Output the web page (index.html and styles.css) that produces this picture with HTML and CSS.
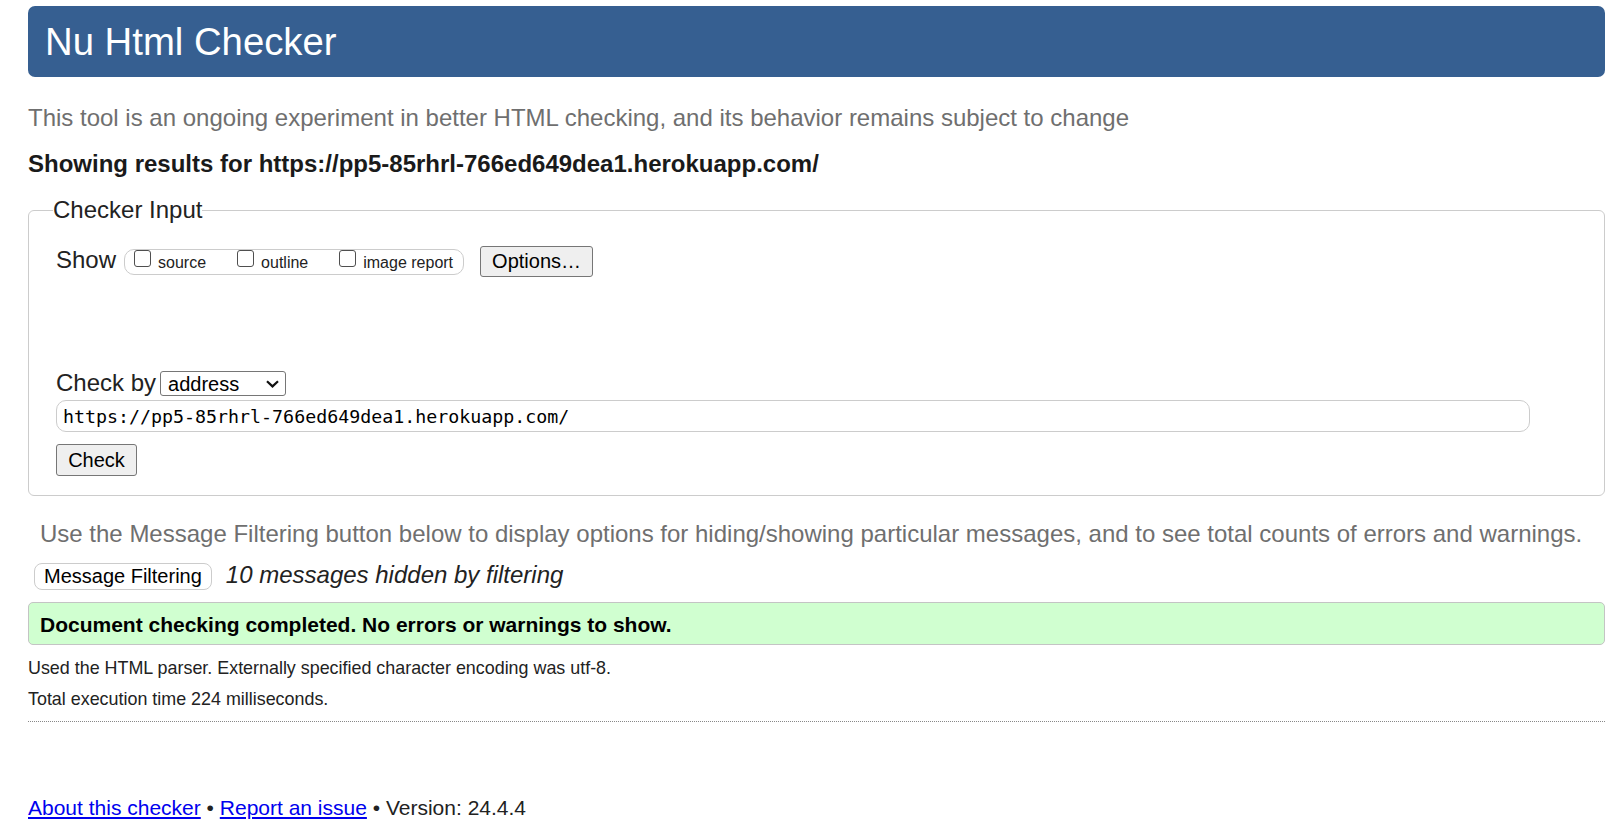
FILE: index.html
```html
<!DOCTYPE html>
<html lang="en">
<head>
<meta charset="utf-8">
<title>Nu Html Checker</title>
<link rel="stylesheet" href="styles.css">
</head>
<body>
<h1 class="title">Nu Html Checker</h1>
<p class="intro">This tool is an ongoing experiment in better HTML checking, and its behavior remains subject to change</p>
<p class="showing">Showing results for https://pp5-85rhrl-766ed649dea1.herokuapp.com/</p>
<fieldset class="checker">
  <legend class="checker-legend">Checker Input</legend>
  <div class="inner">
    <div class="show-row">
      <span class="show-label">Show</span>
      <span class="toggles">
        <label class="toggle"><input type="checkbox" class="box"><span class="toggle-text">source</span></label>
        <label class="toggle"><input type="checkbox" class="box"><span class="toggle-text">outline</span></label>
        <label class="toggle"><input type="checkbox" class="box"><span class="toggle-text">image report</span></label>
      </span>
      <button class="btn options">Options…</button>
    </div>
    <div class="checkby-row">
      <span class="checkby-label">Check by</span>
      <span class="select-wrap">
        <select class="checkby-select"><option>address</option></select>
        <svg class="chev" width="13" height="8" viewBox="0 0 13 8" aria-hidden="true"><path d="M1 1.2 L6.5 6.4 L12 1.2" fill="none" stroke="#111" stroke-width="2.2"/></svg>
      </span>
    </div>
    <input class="url" type="text" value="https://pp5-85rhrl-766ed649dea1.herokuapp.com/">
    <div class="check-row"><button class="btn check">Check</button></div>
  </div>
</fieldset>
<p class="filter-note">Use the Message Filtering button below to display options for hiding/showing particular messages, and to see total counts of errors and warnings.</p>
<div class="filter-row">
  <button class="filter-btn">Message Filtering</button>
  <span class="hidden-count">10 messages hidden by filtering</span>
</div>
<div class="success">Document checking completed. No errors or warnings to show.</div>
<p class="details first">Used the HTML parser. Externally specified character encoding was utf-8.</p>
<p class="details">Total execution time 224 milliseconds.</p>
<hr class="rule">
<p class="footer"><a href="#">About this checker</a> • <a href="#">Report an issue</a> • Version: 24.4.4</p>
</body>
</html>
```
FILE: styles.css
```css
html, body {
  background: #fff;
}
body {
  margin: 0;
  padding: 6px 7px 0 28px;
  font-family: "Liberation Sans", Arial, sans-serif;
  color: #222;
}
.title {
  margin: 0;
  padding: 1px 0 0 17px;
  height: 70px;
  line-height: 70px;
  background: #365f91;
  color: #fff;
  font-size: 38.3px;
  font-weight: normal;
  border-radius: 7px;
}
.intro {
  margin: 27px 0 0;
  font-size: 24px;
  line-height: 28px;
  color: #6f6f6f;
}
.showing {
  margin: 18px 0 0;
  font-size: 24px;
  line-height: 28px;
  font-weight: bold;
  color: #1a1a1a;
}
.checker {
  margin: 18px 0 0;
  padding: 0 20px 19px 24px;
  border: 1px solid #ccc;
  border-radius: 6px;
  min-width: 0;
}
.checker-legend {
  padding: 0;
  font-size: 24px;
  line-height: 28px;
  color: #222;
}
.inner {
  margin-left: 3px;
}
.show-row {
  display: flex;
  align-items: center;
  margin-top: 22px;
  height: 31px;
}
.show-label {
  font-size: 24px;
  line-height: 28px;
  margin: 0 8px 4px 0;
}
.toggles {
  display: flex;
  align-items: center;
  box-sizing: border-box;
  height: 26px;
  border: 1px solid #ccc;
  border-radius: 10px;
  padding: 0 10px 0 9px;
  gap: 31px;
}
.toggle {
  display: flex;
  align-items: center;
  height: 100%;
  font-size: 16px;
  line-height: 18px;
}
.box {
  appearance: none;
  -webkit-appearance: none;
  box-sizing: border-box;
  width: 17px;
  height: 17px;
  margin: -6px 7px 0 0;
  border: 1px solid #4f4f4f;
  border-radius: 3px;
  background: #fff;
}
.toggle-text {
  margin-top: 2px;
}
.btn {
  box-sizing: border-box;
  font-family: "Liberation Sans", Arial, sans-serif;
  font-size: 20px;
  color: #000;
  background: #efefef;
  border: 1px solid #767676;
  border-radius: 3px;
  padding: 0;
}
.options {
  margin-left: 16px;
  width: 113px;
  height: 31px;
}
.checkby-row {
  display: flex;
  align-items: center;
  margin-top: 92px;
  height: 28px;
}
.checkby-label {
  font-size: 24px;
  line-height: 28px;
}
.select-wrap {
  position: relative;
  display: inline-flex;
  margin-left: 4px;
}
.checkby-select {
  appearance: none;
  -webkit-appearance: none;
  box-sizing: border-box;
  width: 126px;
  height: 25px;
  padding: 1px 0 0 7px;
  font-family: "Liberation Sans", Arial, sans-serif;
  font-size: 20px;
  line-height: 22px;
  color: #000;
  background: #fff;
  border: 1px solid #767676;
  border-radius: 3px;
}
.chev {
  position: absolute;
  right: 7px;
  top: 9px;
  pointer-events: none;
}
.url {
  display: block;
  box-sizing: border-box;
  margin-top: 3px;
  width: 1474px;
  height: 32px;
  padding: 0 0 0 6px;
  font-family: "DejaVu Sans Mono", "Liberation Mono", monospace;
  font-size: 18.3px;
  color: #000;
  border: 1px solid #ccc;
  border-radius: 10px;
  background: #fff;
}
.check-row {
  margin-top: 12px;
  display: flex;
}
.check {
  width: 81px;
  height: 32px;
}
.filter-note {
  margin: 24px 0 0;
  padding-left: 12px;
  font-size: 24px;
  line-height: 28px;
  color: #6f6f6f;
}
.filter-row {
  display: flex;
  align-items: baseline;
  margin: 15px 0 0 6px;
}
.filter-btn {
  box-sizing: border-box;
  height: 27px;
  padding: 0 9px;
  font-family: "Liberation Sans", Arial, sans-serif;
  font-size: 20px;
  color: #000;
  background: #fff;
  border: 1px solid #ccc;
  border-radius: 8px;
}
.hidden-count {
  margin-left: 14px;
  font-size: 24px;
  line-height: 24px;
  font-style: italic;
  color: #222;
}
.success {
  box-sizing: border-box;
  margin-top: 12px;
  height: 43px;
  padding: 1px 0 0 11px;
  font-size: 21px;
  line-height: 41px;
  font-weight: bold;
  color: #000;
  background: #d0ffd0;
  border: 1px solid #c4c4c4;
  border-radius: 5px;
}
.details {
  margin: 11px 0 0;
  font-size: 17.9px;
  line-height: 20px;
  color: #222;
}
.details.first {
  margin-top: 13px;
}
.rule {
  margin: 12px 0 0;
  border: 0;
  border-top: 1px dotted #888;
  height: 0;
}
.footer {
  margin: 74px 0 0;
  font-size: 21px;
  line-height: 24px;
  color: #222;
}
.footer a {
  color: #0000ee;
}
```
